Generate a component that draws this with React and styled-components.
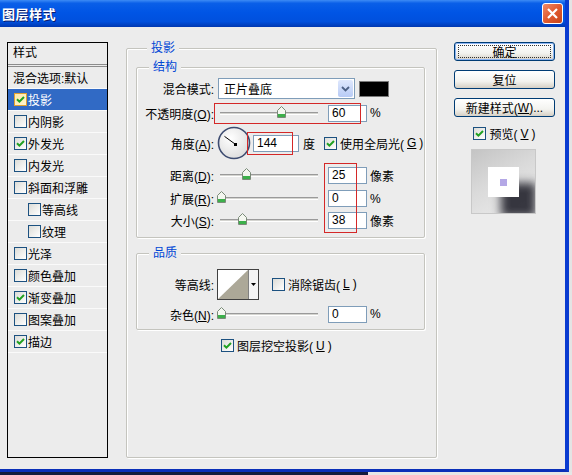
import React from "react";
import styled, { createGlobalStyle } from "styled-components";

const Global = createGlobalStyle`
  html, body {
    margin: 0;
    padding: 0;
    background: #dcdcdc;
  }
  body {
    font-family: "Liberation Sans", "Noto Sans CJK SC", sans-serif;
    font-size: 12px;
    color: #000;
  }
`;

const FONT = `"Liberation Sans", "Noto Sans CJK SC", sans-serif`;

const Page = styled.div`
  width: 572px;
  height: 475px;
  overflow: hidden;
  background: #e4e4e4;
`;

const Window = styled.div`
  width: 565px;
  height: 469px;
  border-right: 4px solid #0a3bd0;
  border-bottom: 3px solid #0a2fb8;
  background: #ececec;
  display: flex;
  flex-direction: column;
`;

const Underline = styled.div`
  height: 3px;
  background: linear-gradient(to right, #141c3c 368px, #e6e6e6 368px);
`;

const TitleBar = styled.div`
  height: 27px;
  flex: none;
  display: flex;
  align-items: center;
  justify-content: space-between;
  padding: 0 2px 0 2px;
  background: linear-gradient(
    to bottom,
    #3d8bf5 0%,
    #0a5fe8 12%,
    #0055e5 45%,
    #0050dd 80%,
    #0037b0 100%
  );
`;

const Title = styled.span`
  font-family: ${FONT};
  font-weight: bold;
  font-size: 13px;
  color: #fff;
  text-shadow: 1px 1px 0 #0a1c6c;
  letter-spacing: 0.5px;
`;

const CloseBtn = styled.div`
  width: 19px;
  height: 19px;
  border: 1px solid #fff;
  border-radius: 3px;
  background: linear-gradient(135deg, #f08a68 0%, #e05a30 50%, #c84418 100%);
  display: flex;
  align-items: center;
  justify-content: center;
`;

const Body = styled.div`
  flex: 1;
  display: flex;
  align-items: flex-start;
  padding: 15px 0 0 7px;
`;

/* ---------- left style list ---------- */

const StyleList = styled.div`
  width: 99px;
  height: 414px;
  border: 1px solid #000;
  flex: none;
`;

const ListHead = styled.div`
  height: 21px;
  line-height: 21px;
  padding-left: 5px;
  border-bottom: 3px double #8c8c8c;
`;

const ListItem = styled.div`
  height: 21px;
  display: flex;
  align-items: center;
  gap: 1px;
  padding-left: ${(p) => p.$indent}px;
  border-bottom: 1px solid #fafafa;
  background: ${(p) => (p.$active ? "#316ac5" : "transparent")};
  color: ${(p) => (p.$active ? "#fff" : "#000")};
`;

/* ---------- checkbox ---------- */

const Box = styled.span`
  width: 11px;
  height: 11px;
  flex: none;
  border: 1px solid ${(p) => (p.$hot ? "#e0a030" : "#1c5180")};
  background: ${(p) =>
    p.$hot
      ? "linear-gradient(135deg, #fde9a8, #fff6d0)"
      : "linear-gradient(135deg, #dcdcd7, #ffffff)"};
  display: inline-flex;
  align-items: center;
  justify-content: center;
`;

const Checkbox = ({ checked, hot }) => (
  <Box $hot={hot}>
    {checked && (
      <svg width="9" height="9" viewBox="0 0 9 9">
        <path
          d="M1 4.3 L3.4 6.6 L8 2"
          stroke="#21a121"
          strokeWidth="2"
          fill="none"
        />
      </svg>
    )}
  </Box>
);

/* ---------- group boxes ---------- */

const Group = styled.div`
  position: relative;
  border: 1px solid #c4c4be;
  box-shadow: inset 1px 1px 0 #fff, 1px 1px 0 #fff;
  border-radius: 2px;
`;

const MainGroup = styled(Group)`
  width: 311px;
  height: 410px;
  margin: 6px 0 0 18px;
  padding: 0 11px 0 9px;
  box-sizing: border-box;
  flex: none;
`;

const SubGroup = styled(Group)`
  width: 289px;
  box-sizing: border-box;
  margin-top: ${(p) => p.$mt}px;
  padding-bottom: ${(p) => p.$pb}px;
`;

const Legend = styled.div`
  width: fit-content;
  margin: -8px 0 0 ${(p) => p.$ml}px;
  padding: 0 4px;
  line-height: 14px;
  background: #ececec;
  color: #0046d5;
`;

/* ---------- form rows ---------- */

const Row = styled.div`
  height: ${(p) => p.$h}px;
  margin-top: ${(p) => p.$mt || 0}px;
  display: flex;
  align-items: center;
`;

const Label = styled.span`
  width: 77px;
  flex: none;
  text-align: right;
  margin-right: 4px;
  white-space: nowrap;
`;

const Select = styled.div`
  width: 130px;
  height: 19px;
  border: 1px solid #7f9db9;
  background: #fff;
  display: flex;
  align-items: center;
  justify-content: space-between;
  padding-left: 5px;
`;

const SelectArrow = styled.div`
  width: 15px;
  height: 17px;
  margin-right: 1px;
  border-radius: 2px;
  background: linear-gradient(to bottom, #dfe8fd, #b8cbf5);
  display: flex;
  align-items: center;
  justify-content: center;
`;

const Swatch = styled.div`
  width: 28px;
  height: 14px;
  margin-left: 4px;
  border: 1px solid #7a7a7a;
  background: #000;
`;

const Field = styled.div`
  width: ${(p) => p.$w}px;
  height: 15px;
  margin-left: ${(p) => p.$ml}px;
  border: 1px solid #7f9db9;
  background: #fff;
  padding-left: 3px;
  line-height: 15px;
  font-size: 12px;
`;

const Unit = styled.span`
  margin-left: ${(p) => p.$ml || 3}px;
  white-space: nowrap;
`;

const Track = styled.div`
  position: relative;
  width: 98px;
  height: 3px;
  margin: 0 4px 0 2px;
  border-top: 1px solid #9a9a9a;
  border-bottom: 1px solid #fff;
  background: #d4d4d0;
  box-sizing: border-box;
`;

const Thumb = styled.svg`
  position: absolute;
  top: -7px;
`;

const Slider = ({ pos }) => (
  <Track>
    <Thumb width="9" height="12" viewBox="0 0 9 12" style={{ left: pos - 4 }}>
      <path
        d="M0.5 11.5 V4.5 L4.5 0.5 L8.5 4.5 V11.5 Z"
        fill="#f4f7f0"
        stroke="#7a8a78"
      />
      <rect x="1" y="8" width="7" height="3" fill="#3cb04a" />
    </Thumb>
  </Track>
);

const Dial = styled.svg`
  flex: none;
  margin-left: -1px;
`;

const CheckLabel = styled.span`
  display: inline-flex;
  align-items: center;
  gap: 3px;
  margin-left: ${(p) => p.$ml || 0}px;
  white-space: nowrap;
`;

const Contour = styled.div`
  width: 40px;
  height: 29px;
  margin-left: -1px;
  border: 1px solid #404040;
  background: #fff;
  display: flex;
`;

const ContourArrow = styled.div`
  width: 9px;
  border-left: 1px solid #808080;
  display: flex;
  align-items: center;
  justify-content: center;
  background: #f4f4f4;
`;

const Mark = styled.div`
  position: absolute;
  left: ${(p) => p.$x}px;
  top: ${(p) => p.$y}px;
  width: ${(p) => p.$w}px;
  height: ${(p) => p.$h}px;
  border: 1px solid #d42828;
  box-sizing: border-box;
  pointer-events: none;
`;

const KnockRow = styled.div`
  display: flex;
  align-items: center;
  height: 13px;
  margin-top: 9px;
  padding-left: 85px;
`;

/* ---------- right column ---------- */

const Side = styled.div`
  width: 101px;
  margin-left: 17px;
  flex: none;
  display: flex;
  flex-direction: column;
  gap: 9px;
`;

const Button = styled.div`
  position: relative;
  height: 17px;
  border: 1px solid #003c74;
  border-radius: 3px;
  background: linear-gradient(to bottom, #ffffff 0%, #f3f3ef 60%, #d6d0c5 100%);
  display: flex;
  align-items: center;
  justify-content: center;
  font-size: 12px;
  box-shadow: ${(p) => (p.$default ? "inset 0 0 0 1px #8cb4f2" : "none")};

  &::after {
    content: "";
    display: ${(p) => (p.$default ? "block" : "none")};
    position: absolute;
    inset: 2px 3px;
    border: 1px dotted #333;
  }
`;

const PreviewRow = styled.div`
  display: flex;
  justify-content: center;
  margin-top: -1px;
`;

const Preview = styled.div`
  width: 63px;
  height: 63px;
  margin: -2px 0 0 17px;
  border: 1px solid #c8c8c8;
  overflow: hidden;
  background: linear-gradient(150deg, #c4c4c4 0%, #dadada 45%, #eeeeee 100%);
`;

const PreviewLayer = styled.div`
  width: 31px;
  height: 30px;
  margin: 17px 0 0 16px;
  background: #fff;
  box-shadow: 15px 18px 9px 2px rgba(30, 30, 40, 0.88);
  display: flex;
  align-items: center;
  justify-content: center;
`;

const PreviewDot = styled.div`
  width: 7px;
  height: 7px;
  background: #b4a8e6;
`;

const items = [
  { name: "投影", checked: true, active: true },
  { name: "内阴影" },
  { name: "外发光", checked: true },
  { name: "内发光" },
  { name: "斜面和浮雕" },
  { name: "等高线", sub: true },
  { name: "纹理", sub: true },
  { name: "光泽" },
  { name: "颜色叠加" },
  { name: "渐变叠加", checked: true },
  { name: "图案叠加" },
  { name: "描边", checked: true },
];

const a = (144 * Math.PI) / 180;

export default function App() {
  return (
    <Page>
      <Global />
      <Window>
        <TitleBar>
          <Title>图层样式</Title>
          <CloseBtn>
            <svg width="13" height="13" viewBox="0 0 13 13">
              <path
                d="M2 2 L11 11 M11 2 L2 11"
                stroke="#fff"
                strokeWidth="2.2"
              />
            </svg>
          </CloseBtn>
        </TitleBar>

        <Body>
          <StyleList>
            <ListHead>样式</ListHead>
            <ListItem $indent={5}>混合选项:默认</ListItem>
            {items.map((it) => (
              <ListItem
                key={it.name}
                $indent={it.sub ? 20 : 6}
                $active={it.active}
              >
                <Checkbox checked={it.checked} hot={it.active} />
                {it.name}
              </ListItem>
            ))}
          </StyleList>

          <MainGroup>
            <Legend $ml={11}>投影</Legend>

            <SubGroup $mt={12} $pb={6}>
              <Legend $ml={12}>结构</Legend>
              <Row $h={23} $mt={3}>
                <Label>混合模式:</Label>
                <Select>
                  正片叠底
                  <SelectArrow>
                    <svg width="9" height="6" viewBox="0 0 9 6">
                      <path
                        d="M1 1 L4.5 4.5 L8 1"
                        stroke="#4d6185"
                        strokeWidth="1.8"
                        fill="none"
                      />
                    </svg>
                  </SelectArrow>
                </Select>
                <Swatch />
              </Row>
              <Row $h={26}>
                <Label>
                  不透明度(<u>O</u>):
                </Label>
                <Slider pos={61} />
                <Field $w={34} $ml={6}>
                  60
                </Field>
                <Unit>%</Unit>
              </Row>
              <Row $h={34}>
                <Label>
                  角度(<u>A</u>):
                </Label>
                <Dial width="34" height="34" viewBox="0 0 34 34">
                  <defs>
                    <radialGradient id="dialBg" cx="0.4" cy="0.35" r="0.7">
                      <stop offset="0" stopColor="#ffffff" />
                      <stop offset="1" stopColor="#dcdcdc" />
                    </radialGradient>
                  </defs>
                  <circle
                    cx="17"
                    cy="17"
                    r="15.5"
                    fill="url(#dialBg)"
                    stroke="#3c4b70"
                    strokeWidth="1.6"
                  />
                  <line
                    x1="18"
                    y1="18"
                    x2={18 + 13 * Math.cos(a)}
                    y2={18 - 13 * Math.sin(a)}
                    stroke="#000"
                    strokeWidth="1"
                  />
                  <rect x="17" y="17" width="3" height="3" fill="#000" />
                </Dial>
                <Field $w={41} $ml={2}>
                  144
                </Field>
                <Unit $ml={4}>度</Unit>
                <CheckLabel $ml={9}>
                  <Checkbox checked />
                  使用全局光(<u>G</u>)
                </CheckLabel>
              </Row>
              <Row $h={24} $mt={3}>
                <Label>
                  距离(<u>D</u>):
                </Label>
                <Slider pos={26} />
                <Field $w={34} $ml={6}>
                  25
                </Field>
                <Unit>像素</Unit>
              </Row>
              <Row $h={23}>
                <Label>
                  扩展(<u>R</u>):
                </Label>
                <Slider pos={1} />
                <Field $w={34} $ml={6}>
                  0
                </Field>
                <Unit>%</Unit>
              </Row>
              <Row $h={21}>
                <Label>
                  大小(<u>S</u>):
                </Label>
                <Slider pos={22} />
                <Field $w={34} $ml={6}>
                  38
                </Field>
                <Unit>像素</Unit>
              </Row>

              <Mark $x={77} $y={35} $w={147} $h={21} />
              <Mark $x={110} $y={64} $w={46} $h={23} />
              <Mark $x={187} $y={95} $w={33} $h={70} />
            </SubGroup>

            <SubGroup $mt={15} $pb={3}>
              <Legend $ml={12}>品质</Legend>
              <Row $h={32} $mt={8}>
                <Label>等高线:</Label>
                <Contour>
                  <svg width="30" height="29" viewBox="0 0 30 29">
                    <path d="M0 29 L30 0 L30 29 Z" fill="#aca898" />
                  </svg>
                  <ContourArrow>
                    <svg width="5" height="3" viewBox="0 0 5 3">
                      <path d="M0 0 H5 L2.5 3 Z" fill="#000" />
                    </svg>
                  </ContourArrow>
                </Contour>
                <CheckLabel $ml={13}>
                  <Checkbox />
                  消除锯齿(<u>L</u>)
                </CheckLabel>
              </Row>
              <Row $h={24} $mt={2}>
                <Label>
                  杂色(<u>N</u>):
                </Label>
                <Slider pos={1} />
                <Field $w={34} $ml={6}>
                  0
                </Field>
                <Unit>%</Unit>
              </Row>
            </SubGroup>

            <KnockRow>
              <CheckLabel>
                <Checkbox checked />
                图层挖空投影(<u>U</u>)
              </CheckLabel>
            </KnockRow>
          </MainGroup>

          <Side>
            <Button $default>确定</Button>
            <Button>复位</Button>
            <Button>
              新建样式(<u>W</u>)...
            </Button>
            <PreviewRow>
              <CheckLabel>
                <Checkbox checked />
                预览(<u>V</u>)
              </CheckLabel>
            </PreviewRow>
            <Preview>
              <PreviewLayer>
                <PreviewDot />
              </PreviewLayer>
            </Preview>
          </Side>
        </Body>
      </Window>
      <Underline />
    </Page>
  );
}
